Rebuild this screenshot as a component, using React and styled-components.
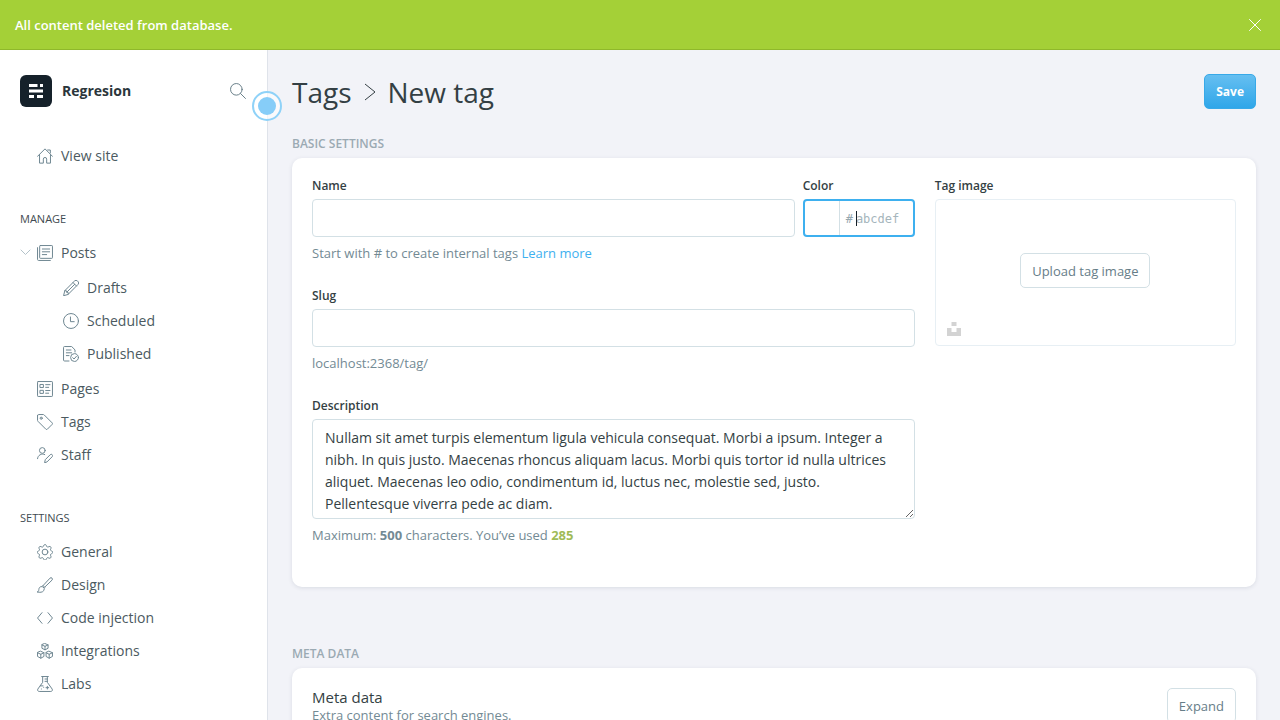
import React from "react";
import styled, { createGlobalStyle, css } from "styled-components";

const GlobalStyle = createGlobalStyle`
  *, *::before, *::after { box-sizing: border-box; }
  body {
    margin: 0;
    background: #f2f3f8;
    color: #343f44;
    font-family: "Open Sans", "Noto Sans", sans-serif;
    font-size: 13px;
  }
  button, input, textarea { font-family: inherit; margin: 0; }
  a { text-decoration: none; }
`;

const Shell = styled.div`
  display: flex;
  flex-direction: column;
  height: 100vh;
`;

const Banner = styled.div`
  display: flex;
  align-items: center;
  justify-content: space-between;
  flex: none;
  height: 50px;
  padding: 0 19px 0 15px;
  background: #a4d037;
  border-bottom: 1px solid #8fb82b;
  color: #fff;
  font-weight: 600;
`;

const BareButton = styled.button`
  display: flex;
  padding: 0;
  border: 0;
  background: none;
  color: inherit;
  cursor: pointer;
`;

const Body = styled.div`
  display: flex;
  flex: 1;
  min-height: 0;
`;

const Sidebar = styled.aside`
  position: relative;
  flex: none;
  width: 268px;
  padding-top: 25px;
  background: #fff;
  border-right: 1px solid #dfe3ea;
`;

const Brand = styled.div`
  display: flex;
  align-items: center;
  height: 32px;
  margin-bottom: 32px;
  padding: 0 21px 0 20px;
  color: #5f7681;
`;

const SiteName = styled.div`
  flex: 1;
  padding: 0 0 2px 10px;
  color: #2b363b;
  font-size: 14px;
  font-weight: 700;
`;

const Beacon = styled.button`
  position: absolute;
  z-index: 2;
  top: 41px;
  right: -15px;
  width: 30px;
  height: 30px;
  padding: 4px;
  border: 2px solid #8fd2f8;
  border-radius: 50%;
  background: rgba(255, 255, 255, 0.6);
  cursor: pointer;

  &::before {
    content: "";
    display: block;
    height: 18px;
    border-radius: 50%;
    background: #86cdf8;
  }
`;

const NavHeading = styled.h2`
  margin: 39px 0 9px;
  padding-left: 20px;
  color: #3f4b51;
  font-size: 11px;
  font-weight: 500;
  line-height: 16px;
  text-transform: uppercase;
`;

const NavList = styled.ul`
  margin: 0;
  padding: 0;
  list-style: none;
`;

const SubList = styled(NavList)`
  margin: 2px 0;
  padding-left: 26px;
`;

const NavRow = styled.div`
  display: flex;
  align-items: center;
  height: 33px;
  padding-left: ${(p) => (p.$expandable ? "20px" : "37px")};
  gap: 6px;
  color: #b4c3ca;
`;

const NavLink = styled.a`
  display: flex;
  align-items: center;
  gap: 8px;
  color: #4b5a61;
  font-size: 14px;

  svg { color: #6f8792; }
`;

const Main = styled.main`
  flex: 1;
  min-width: 0;
  padding: 24px 24px 48px;
  overflow-y: auto;
  scrollbar-width: none;
`;

const PageHeader = styled.header`
  display: flex;
  align-items: center;
  justify-content: space-between;
  height: 35px;
  margin-bottom: 26px;
`;

const PageTitle = styled.h1`
  display: flex;
  align-items: center;
  gap: 12px;
  margin: 0;
  font-size: 28px;
  font-weight: 500;

  a { color: inherit; }
`;

const SaveButton = styled.button`
  height: 35px;
  padding: 0 11px;
  border: 1px solid #38a9e8;
  border-radius: 5px;
  background: linear-gradient(#66bff1, #2fa6e9);
  color: #fff;
  font-size: 12px;
  font-weight: 700;
  cursor: pointer;
`;

const OutlineButton = styled.button`
  height: 35px;
  padding: 0 11px;
  border: 1px solid #d3e0e5;
  border-radius: 5px;
  background: #fff;
  color: #667d88;
  font-size: 13px;
  cursor: pointer;
`;

const SectionTitle = styled.h2`
  margin: 0 0 5px;
  color: #9baab3;
  font-size: 12px;
  font-weight: 600;
  line-height: 18px;
  text-transform: uppercase;
`;

const Section = styled.section`
  & + & { margin-top: 58px; }
`;

const card = css`
  padding: 20px;
  border-radius: 10px;
  background: #fff;
  box-shadow: 0 1px 4px rgba(40, 60, 80, 0.12);
`;

const FormCard = styled.form`
  ${card}
  display: grid;
  grid-template-columns: 2fr 1fr;
  align-items: start;
  gap: 20px;
  padding-bottom: 42px;
`;

const MetaCard = styled.div`
  ${card}
  display: flex;
  align-items: flex-start;
  justify-content: space-between;
`;

const Stack = styled.div`
  display: flex;
  flex-direction: column;
  gap: 25px;
`;

const NameRow = styled.div`
  display: grid;
  grid-template-columns: 1fr 112px;
  gap: 8px;
`;

const Label = styled.label`
  display: block;
  margin-bottom: 5px;
  font-size: 12px;
  font-weight: 600;
  line-height: 16px;
`;

const field = css`
  display: block;
  width: 100%;
  border: 1px solid #d3e0e5;
  border-radius: 4px;
  background: #fff;
  color: #343f44;
  outline: 0;
`;

const TextInput = styled.input`
  ${field}
  height: 38px;
  padding: 0 12px;
  font-size: 14px;
`;

const TextArea = styled.textarea`
  ${field}
  height: 100px;
  padding: 7px 12px;
  font-size: 14px;
  line-height: 22px;
  resize: vertical;
  overflow: hidden;
`;

const Helper = styled.p`
  margin: 6px 0 0;
  color: #738a94;
  font-size: 13px;
  line-height: 20px;

  a { color: #3eb0ef; }
`;

const Used = styled.b`
  color: #9fbb58;
`;

const ColorField = styled.div`
  display: flex;
  height: 38px;
  border: 2px solid #3eb0ef;
  border-radius: 4px;
  color: #95a7b0;
  font-family: "DejaVu Sans Mono", monospace;
  font-size: 12px;
  line-height: 36px;
`;

const Swatch = styled.span`
  flex: none;
  width: 35px;
  margin-right: 6px;
  border-right: 1px solid #d3e0e5;
`;

const HexEntry = styled.span`
  position: relative;
  display: flex;
  flex: 1;
  min-width: 0;
  margin-left: 3px;

  &::before {
    content: "";
    position: absolute;
    top: 10px;
    left: 0;
    width: 1px;
    height: 15px;
    background: #15212a;
  }
`;

const HexInput = styled.input`
  width: 100%;
  padding: 2px 0 0;
  border: 0;
  outline: 0;
  background: none;
  color: #343f44;
  font-family: inherit;
  font-size: inherit;
  caret-color: transparent;

  &::placeholder { color: #a5b5bc; opacity: 1; }
`;

const ImageBox = styled.div`
  position: relative;
  display: flex;
  align-items: center;
  justify-content: center;
  height: 147px;
  padding-bottom: 4px;
  border: 1px solid #e7eff4;
  border-radius: 4px;
`;

const UnsplashButton = styled(BareButton)`
  position: absolute;
  bottom: 9px;
  left: 11px;
  color: #d3d3d3;
`;

const MetaTitle = styled.h3`
  margin: 0;
  font-size: 15px;
  font-weight: 500;
  line-height: 18px;
`;

const MetaText = styled.p`
  margin: 0;
  color: #738a94;
  font-size: 13px;
  line-height: 18px;
`;

const Glyph = ({ children, size = 16, box = 24, stroke = 1.5 }) => (
  <svg
    width={size}
    height={size}
    viewBox={`0 0 ${box} ${box}`}
    fill="none"
    stroke="currentColor"
    strokeWidth={stroke}
    strokeLinecap="round"
    strokeLinejoin="round"
    aria-hidden="true"
  >
    {children}
  </svg>
);

const icons = {
  home: (
    <>
      <path d="M.8 12.5 12 1.3l11.2 11.2" />
      <path d="M3.8 10v12.7h5.7v-6a2.5 2.5 0 0 1 5 0v6h5.7V10M16 3h4v4.5" />
    </>
  ),
  posts: (
    <>
      <rect x="4" y=".8" width="19.2" height="19.2" rx="1" />
      <path d="M.8 4v17.7c0 .9.6 1.5 1.5 1.5H20M8 6h11M8 10.2h11M8 14.4h6.5" />
    </>
  ),
  pencil: (
    <>
      <path d="M1 23l1.700-7L17.200 1.600a3.200 3.200 0 0 1 4.700 0l.5.5a3.200 3.200 0 0 1 0 4.700L8 21.300z" />
      <path d="m2.700 16 2.600.3.4 2 2 .4.3 2.600M15 3.800 20.200 9M17.600 6.400 5.700 18.300" />
    </>
  ),
  clock: (
    <>
      <circle cx="12" cy="12" r="11.2" />
      <path d="M11.2 6v7h5.600" />
    </>
  ),
  published: (
    <>
      <path d="M9 22.500H2.300A1.500 1.500 0 0 1 .8 21V2.300A1.500 1.500 0 0 1 2.300.8H13l5 5V9M5 6h7M5 10.200h8M5 14.400h4" />
      <circle cx="17.3" cy="17.3" r="5.9" />
      <path d="m14.600 17.500 2 2 3.500-4" />
    </>
  ),
  pages: (
    <>
      <rect x=".8" y=".8" width="22.4" height="22.4" rx="1" />
      <rect x="5" y="5.2" width="4.6" height="4.6" />
      <rect x="5" y="14" width="4.6" height="4.6" />
      <path d="M13 5.500h6.500M13 9.500h4.500M13 14.300h6.500M13 18.300h4.500" />
    </>
  ),
  tag: (
    <>
      <path d="M.8 2.300v7.200c0 .6.2 1 .6 1.400l12 12c.6.5 1.500.5 2 0l7.400-7.400c.6-.6.6-1.500 0-2.100l-12-12A2 2 0 0 0 9.500.8H2.300A1.500 1.500 0 0 0 .8 2.300z" />
      <circle cx="6.3" cy="6.3" r="1.6" />
    </>
  ),
  staff: (
    <>
      <circle cx="8" cy="5.2" r="4.3" />
      <path d="M.8 17.500a7.300 7.300 0 0 1 10.800-6.200M11.500 23l.9-4 7.400-7.400a2 2 0 0 1 3 3L15.400 22z" />
    </>
  ),
  gear: (
    <>
      <circle cx="12" cy="12" r="4.3" />
      <path d="M10 2.200c.7-1.900 3.300-1.900 4 0l.5 1.400c.3.9 1.300 1.300 2.200.9l1.300-.6c1.900-.9 3.700.9 2.900 2.800l-.6 1.300c-.4.9 0 1.900.9 2.200l1 .3c1.900.7 1.900 3.300 0 4l-1 .3c-.9.3-1.300 1.300-.9 2.200l.6 1.300c.8 1.900-1 3.700-2.900 2.900l-1.300-.6c-.9-.4-1.900 0-2.200.9l-.5 1.300c-.7 1.900-3.300 1.900-4 0l-.5-1.300c-.3-.9-1.300-1.300-2.200-.9l-1.300.6c-1.900.8-3.700-1-2.900-2.900l.6-1.300c.4-.9 0-1.900-.9-2.200l-1-.3c-1.900-.7-1.900-3.300 0-4l1-.3c.9-.3 1.300-1.300.9-2.200l-.6-1.300c-.8-1.900 1-3.700 2.900-2.800l1.300.6c.9.4 1.900 0 2.200-.9z" />
    </>
  ),
  brush: (
    <>
      <path d="M9 13 19.500 1.700a2.100 2.100 0 0 1 3 3L11.500 15.300M9 12.800l2.700 2.700" />
      <path d="M.8 22.500c2.400-.8 1.500-3.200 2.400-5.600a4.200 4.200 0 0 1 5.600-2.200 4 4 0 0 1 1.400 5.600c-1.800 2.900-6 3.200-9.400 2.200z" />
    </>
  ),
  code: <path d="M7.500 4 .8 12l6.700 8M16.500 4l6.700 8-6.700 8" />,
  blocks: (
    <>
      <path d="m12 .8 4.600 2.100v5L12 10.200 7.400 7.900v-5zM7.400 2.900 12 5l4.600-2.100M12 5v5.200" />
      <path d="m5.700 12.400 4.700 2.200v5.600l-4.700 2.600L.8 20.200v-5.600zM.8 14.600l4.900 2.300 4.700-2.300M5.700 16.900v5.900" />
      <path d="m18.300 12.400 4.900 2.200v5.600l-4.900 2.600-4.700-2.600v-5.600zM13.600 14.600l4.700 2.300 4.900-2.300M18.300 16.900v5.900" />
    </>
  ),
  flask: (
    <>
      <path d="M7 .8h10M8.500.8v8.700L1.300 19.500c-1 1.700 0 3.700 2 3.700h17.400c2 0 3-2 2-3.700L15.500 9.500V.8M12 4.500h3.500M12 8h3.500M5 14.800h4" />
      <path d="M15.500 15.500v4M13.500 17.500h4M6.500 19.500h.1M10 17h.1" />
    </>
  ),
};

const Icon = ({ name }) => <Glyph>{icons[name]}</Glyph>;

const NavItem = ({ icon, children, expandable, sub }) => (
  <li>
    <NavRow $expandable={expandable}>
      {expandable && (
        <BareButton type="button" aria-label="Toggle posts">
          <Glyph size={11} box={11} stroke={1}>
            <path d="m1 3 4.500 4.500L10 3" />
          </Glyph>
        </BareButton>
      )}
      <NavLink href="#">
        <Icon name={icon} />
        {children}
      </NavLink>
    </NavRow>
    {sub}
  </li>
);

const Logo = () => (
  <svg width="32" height="32" viewBox="0 0 32 32" role="img" aria-label="Site icon">
    <rect width="32" height="32" rx="6" fill="#15212a" />
    <path
      fill="#fff"
      d="M9 9h8.500v3H9zM20 9h3v3h-3zM9 14.500h14v3H9zM9 20h5v3H9zM17 20h6v3h-6z"
    />
  </svg>
);

const description =
  "Nullam sit amet turpis elementum ligula vehicula consequat. Morbi a ipsum. Integer a nibh. In quis justo. Maecenas rhoncus aliquam lacus. Morbi quis tortor id nulla ultrices aliquet. Maecenas leo odio, condimentum id, luctus nec, molestie sed, justo. Pellentesque viverra pede ac diam.";

export default function App() {
  return (
    <Shell>
      <GlobalStyle />
      <Banner role="status">
        All content deleted from database.
        <BareButton type="button" aria-label="Close">
          <Glyph size={12} box={12} stroke={1}>
            <path d="m.5.5 11 11M11.500.5l-11 11" />
          </Glyph>
        </BareButton>
      </Banner>
      <Body>
        <Sidebar>
          <Brand>
            <Logo />
            <SiteName>Regresion</SiteName>
            <BareButton type="button" aria-label="Search">
              <Glyph size={16} stroke={1.4}>
                <circle cx="9.500" cy="9.500" r="8.700" />
                <path d="m15.800 15.800 7.400 7.400" />
              </Glyph>
            </BareButton>
          </Brand>
          <Beacon type="button" aria-label="Toggle sidebar" />
          <nav>
            <NavList>
              <NavItem icon="home">View site</NavItem>
            </NavList>
            <NavHeading>Manage</NavHeading>
            <NavList>
              <NavItem
                icon="posts"
                expandable
                sub={
                  <SubList>
                    <NavItem icon="pencil">Drafts</NavItem>
                    <NavItem icon="clock">Scheduled</NavItem>
                    <NavItem icon="published">Published</NavItem>
                  </SubList>
                }
              >
                Posts
              </NavItem>
              <NavItem icon="pages">Pages</NavItem>
              <NavItem icon="tag">Tags</NavItem>
              <NavItem icon="staff">Staff</NavItem>
            </NavList>
            <NavHeading>Settings</NavHeading>
            <NavList>
              <NavItem icon="gear">General</NavItem>
              <NavItem icon="brush">Design</NavItem>
              <NavItem icon="code">Code injection</NavItem>
              <NavItem icon="blocks">Integrations</NavItem>
              <NavItem icon="flask">Labs</NavItem>
            </NavList>
          </nav>
        </Sidebar>
        <Main>
          <PageHeader>
            <PageTitle>
              <a href="#">Tags</a>
              <svg width="12" height="18" viewBox="0 0 12 18" fill="none" stroke="currentColor" aria-hidden="true">
                <path d="m1 1 10 8-10 8" />
              </svg>
              New tag
            </PageTitle>
            <SaveButton type="submit" form="tag-form">Save</SaveButton>
          </PageHeader>
          <Section>
            <SectionTitle>Basic settings</SectionTitle>
            <FormCard id="tag-form" onSubmit={(e) => e.preventDefault()}>
              <Stack>
                <div>
                  <NameRow>
                    <div>
                      <Label htmlFor="tag-name">Name</Label>
                      <TextInput id="tag-name" type="text" />
                    </div>
                    <div>
                      <Label htmlFor="tag-color">Color</Label>
                      <ColorField>
                        <Swatch />#
                        <HexEntry>
                          <HexInput id="tag-color" type="text" placeholder="abcdef" maxLength={6} />
                        </HexEntry>
                      </ColorField>
                    </div>
                  </NameRow>
                  <Helper>
                    Start with # to create internal tags <a href="#">Learn more</a>
                  </Helper>
                </div>
                <div>
                  <Label htmlFor="tag-slug">Slug</Label>
                  <TextInput id="tag-slug" type="text" />
                  <Helper>localhost:2368/tag/</Helper>
                </div>
                <div>
                  <Label htmlFor="tag-description">Description</Label>
                  <TextArea id="tag-description" defaultValue={description} />
                  <Helper>
                    Maximum: <b>500</b> characters. You’ve used <Used>285</Used>
                  </Helper>
                </div>
              </Stack>
              <div>
                <Label as="div">Tag image</Label>
                <ImageBox>
                  <OutlineButton type="button">Upload tag image</OutlineButton>
                  <UnsplashButton type="button" aria-label="Choose from Unsplash">
                    <svg width="14" height="14" viewBox="0 0 14 14" fill="currentColor" aria-hidden="true">
                      <path d="M4.500 0h5v4h-5zM0 6h4.500v4h5V6H14v8H0z" />
                    </svg>
                  </UnsplashButton>
                </ImageBox>
              </div>
            </FormCard>
          </Section>
          <Section>
            <SectionTitle>Meta data</SectionTitle>
            <MetaCard>
              <div>
                <MetaTitle>Meta data</MetaTitle>
                <MetaText>Extra content for search engines.</MetaText>
              </div>
              <OutlineButton type="button">Expand</OutlineButton>
            </MetaCard>
          </Section>
        </Main>
      </Body>
    </Shell>
  );
}
